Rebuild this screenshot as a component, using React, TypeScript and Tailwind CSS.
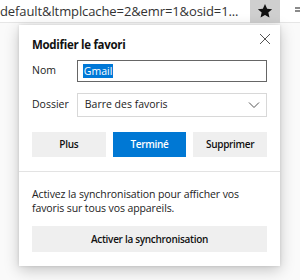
import React from "react";

export default function App() {
  const font = { fontFamily: '"Open Sans", "Noto Sans", sans-serif' };
  return (
    <div className="relative w-[300px] h-[280px] overflow-hidden bg-white text-[#1b1b1b]" style={font}>
      {/* top bar */}
      <div className="flex h-[23px] items-center border-b border-[#e6e6e6] bg-white">
        <div className="w-[246px] overflow-hidden whitespace-nowrap text-[13px] leading-[22px] text-[#333] tracking-[-0.1px]">
          default&amp;ltmplcache=2&amp;emr=1&amp;osid=1...
        </div>
        <div className="ml-[4px] flex h-[23px] w-[30px] items-center justify-center bg-[#cfcfcf]">
          <svg width="16" height="16" viewBox="0 0 24 24">
            <path d="M12 1.5l3.2 7 7.5.7-5.7 5.1 1.7 7.5L12 17.9 5.3 21.8 7 14.3 1.3 9.2l7.5-.7z" fill="#111" />
          </svg>
        </div>
        <div className="flex-1" />
        <svg width="6" height="10" viewBox="0 0 6 10">
          <path d="M1 2h5M1 5h5" stroke="#666" strokeWidth="1.5" />
        </svg>
      </div>
      <div className="h-full bg-[#fafafa]" />

      {/* popup */}
      <div className="absolute left-[19px] top-[25px] w-[261px] h-[241px] bg-white shadow-[0_4px_14px_rgba(0,0,0,0.22),0_0_3px_rgba(0,0,0,0.12)]">
        <button className="absolute right-[7px] top-[6px] flex h-[16px] w-[16px] items-center justify-center">
          <svg width="12" height="12" viewBox="0 0 12 12">
            <path d="M1 1L11 11M11 1L1 11" stroke="#555" strokeWidth="1" fill="none" />
          </svg>
        </button>
        <div className="px-[13px] pt-[10px]">
          <div className="text-[11.5px] font-bold leading-[20px] tracking-[-0.3px] text-[#111]">Modifier le favori</div>
          <div className="mt-[5px] flex items-center">
            <div className="w-[45px] text-[10.5px] text-[#222]">Nom</div>
            <div className="flex h-[22px] w-[191px] items-center border border-[#666] px-[5px]">
              <span className="bg-[#0078d7] px-[1px] text-[10.5px] leading-[14px] text-white">Gmail</span>
            </div>
          </div>
          <div className="mt-[11px] flex items-center">
            <div className="w-[45px] text-[10.5px] text-[#222]">Dossier</div>
            <div className="flex h-[24px] w-[191px] items-center justify-between border border-[#d8d8d8] pl-[7px] pr-[6px]">
              <span className="text-[10.5px] text-[#1b1b1b]">Barre des favoris</span>
              <svg width="12" height="8" viewBox="0 0 12 8">
                <path d="M1 1.5L6 6.5L11 1.5" stroke="#555" strokeWidth="1" fill="none" />
              </svg>
            </div>
          </div>
          <div className="mt-[15px] grid grid-cols-3 gap-[7px]">
            <button className="h-[25px] bg-[#efefef] text-[10px] font-semibold tracking-[-0.3px] text-[#111]">Plus</button>
            <button className="h-[25px] bg-[#0078d4] text-[10px] font-semibold tracking-[-0.3px] text-white">Terminé</button>
            <button className="h-[25px] bg-[#efefef] text-[10px] font-semibold tracking-[-0.3px] text-[#111]">Supprimer</button>
          </div>
        </div>
        <div className="mt-[14px] border-t border-[#e3e3e3]" />
        <div className="px-[13px]">
          <p className="mt-[15px] text-[10.5px] leading-[14px] tracking-[-0.1px] text-[#222]">
            Activez la synchronisation pour afficher vos<br />favoris sur tous vos appareils.
          </p>
          <button className="mt-[11px] h-[26px] w-full bg-[#efefef] text-[10px] font-semibold tracking-[-0.3px] text-[#111]">
            Activer la synchronisation
          </button>
        </div>
      </div>
    </div>
  );
}
